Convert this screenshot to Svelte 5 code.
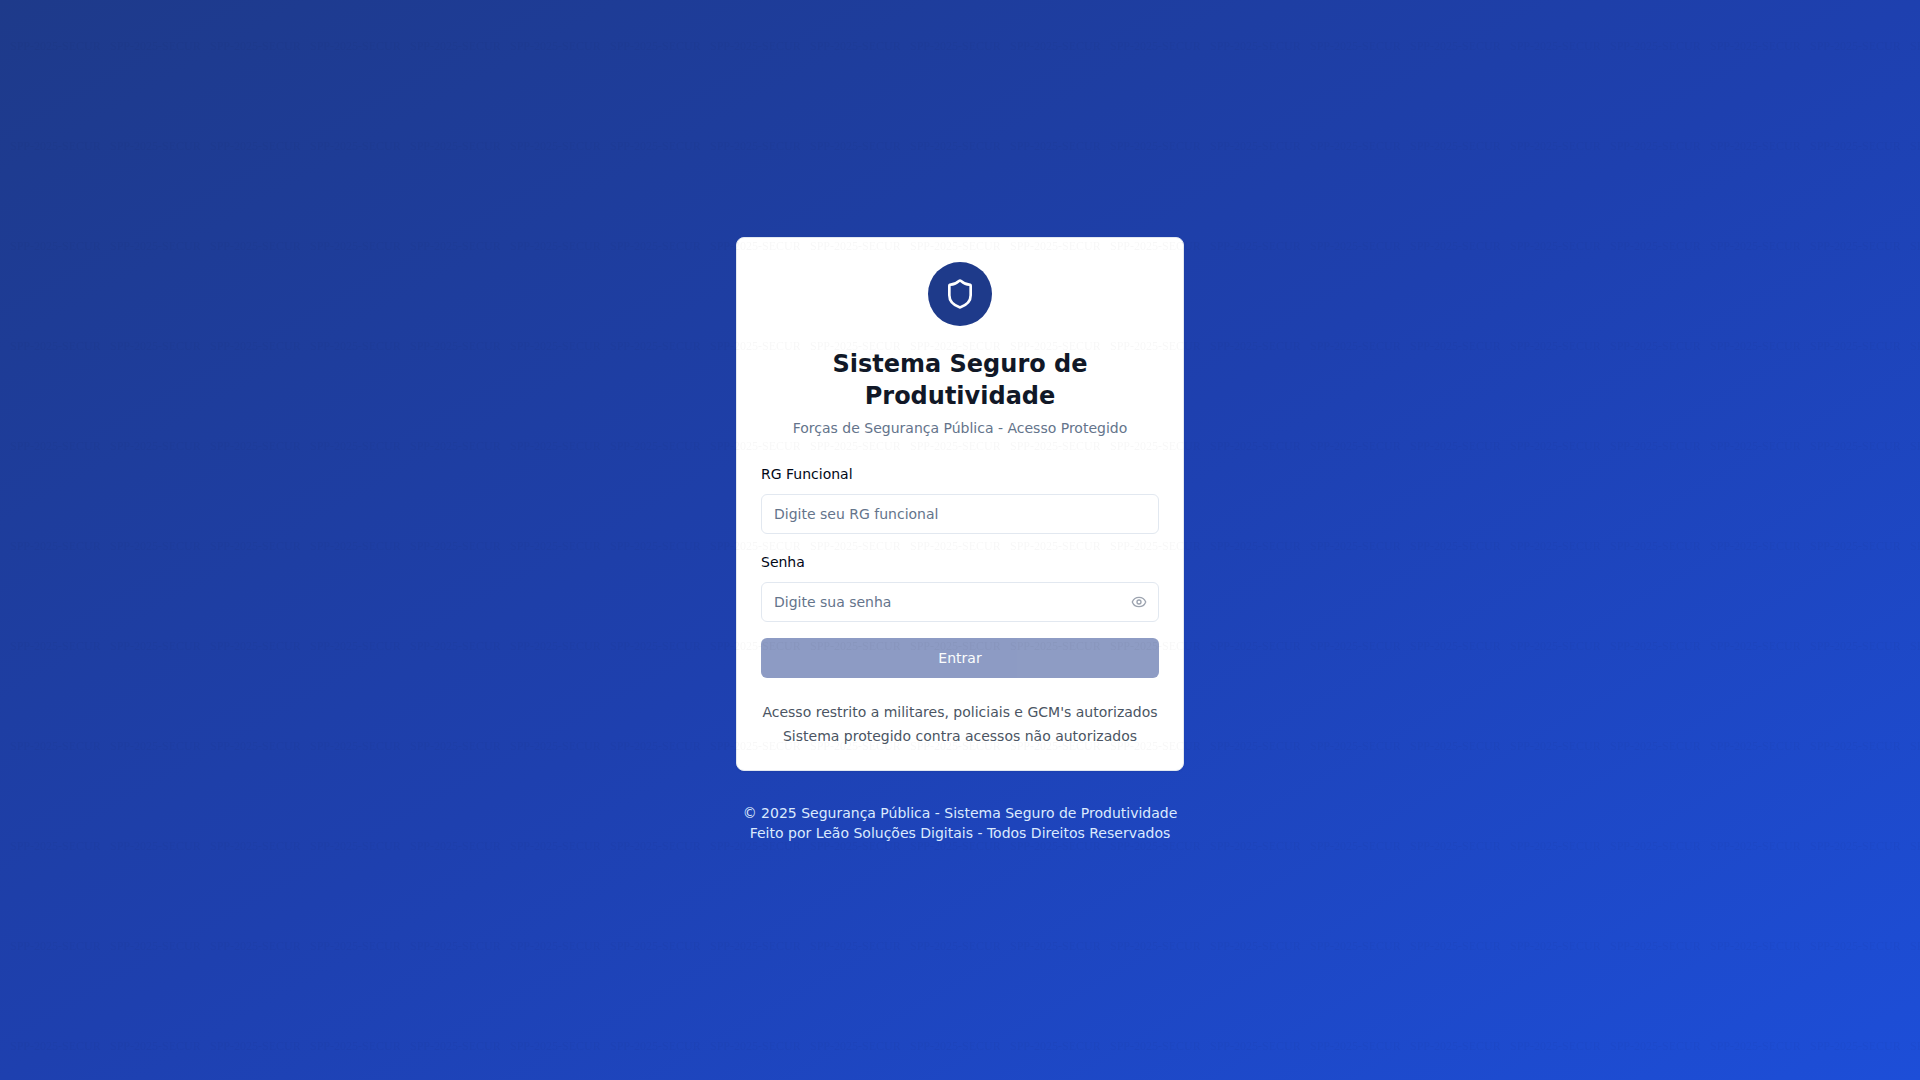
<script>
  let rg = $state('');
  let password = $state('');
  let visible = $state(false);
  const ready = $derived(rg.length > 0 && password.length > 0);
</script>

<main class="page">
  <div class="column">
    <section class="card">
      <header class="header">
        <div class="badge">
          <svg width="32" height="32" viewBox="0 0 24 24" aria-hidden="true">
            <path d="M20 13c0 5-3.5 7.5-7.66 8.95a1 1 0 0 1-.67-.01C7.5 20.5 4 18 4 13V6a1 1 0 0 1 1-1c2 0 4.5-1.2 6.24-2.72a1.17 1.17 0 0 1 1.52 0C14.51 3.81 17 5 19 5a1 1 0 0 1 1 1z" />
          </svg>
        </div>
        <h1>Sistema Seguro de Produtividade</h1>
        <p>Forças de Segurança Pública - Acesso Protegido</p>
      </header>

      <form onsubmit={(event) => event.preventDefault()}>
        <div class="field">
          <label for="rg">RG Funcional</label>
          <input id="rg" type="text" placeholder="Digite seu RG funcional" bind:value={rg} />
        </div>
        <div class="field">
          <label for="password">Senha</label>
          <div class="password">
            <input
              id="password"
              type={visible ? 'text' : 'password'}
              placeholder="Digite sua senha"
              bind:value={password}
            />
            <button class="reveal" type="button" aria-label="Mostrar senha" onclick={() => (visible = !visible)}>
              <svg width="16" height="16" viewBox="0 0 24 24" aria-hidden="true">
                <path d="M2.062 12.348a1 1 0 0 1 0-.696 10.75 10.75 0 0 1 19.876 0 1 1 0 0 1 0 .696 10.75 10.75 0 0 1-19.876 0" />
                <circle cx="12" cy="12" r="3" />
              </svg>
            </button>
          </div>
        </div>
        <button class="submit" type="submit" disabled={!ready}>Entrar</button>
      </form>

      <div class="notes">
        <p>Acesso restrito a militares, policiais e GCM's autorizados</p>
        <p>Sistema protegido contra acessos não autorizados</p>
      </div>
    </section>

    <footer>
      <p>© 2025 Segurança Pública - Sistema Seguro de Produtividade</p>
      <p>Feito por Leão Soluções Digitais - Todos Direitos Reservados</p>
    </footer>
  </div>
</main>

<svg class="watermark" aria-hidden="true">
  <defs>
    <pattern id="mark" width="100" height="100" patternUnits="userSpaceOnUse">
      <text x="10" y="50">SPP-2025-SECUR</text>
    </pattern>
  </defs>
  <rect width="100%" height="100%" fill="url(#mark)" />
</svg>

<style>
  :global(body) {
    margin: 0;
  }

  .page,
  .page * {
    box-sizing: border-box;
  }

  .page {
    min-height: 100vh;
    display: flex;
    align-items: center;
    justify-content: center;
    padding: 16px;
    background: linear-gradient(to bottom right, #1e3a8a, #1e40af, #1d4ed8);
    font-family: 'DejaVu Sans', sans-serif;
    font-size: 14px;
    line-height: 20px;
  }

  .column {
    width: 100%;
    max-width: 448px;
  }

  .card {
    padding: 24px;
    border: 1px solid #e2e8f0;
    border-radius: 8px;
    background: #fff;
    box-shadow: 0 1px 2px rgb(0 0 0 / 5%);
  }

  h1,
  p {
    margin: 0;
  }

  .header {
    display: flex;
    flex-direction: column;
    align-items: center;
    gap: 6px;
    padding-bottom: 24px;
    text-align: center;
    color: #64748b;
  }

  .badge {
    display: flex;
    align-items: center;
    justify-content: center;
    width: 64px;
    height: 64px;
    margin-bottom: 16px;
    border-radius: 50%;
    background: #1e3a8a;
    color: #fff;
  }

  .badge svg,
  .reveal svg {
    display: block;
    fill: none;
    stroke: currentColor;
    stroke-width: 2;
    stroke-linecap: round;
    stroke-linejoin: round;
  }

  h1 {
    color: #111827;
    font-size: 24px;
    line-height: 32px;
    font-weight: 700;
  }

  form {
    display: flex;
    flex-direction: column;
    gap: 16px;
  }

  .field {
    display: flex;
    flex-direction: column;
    gap: 8px;
  }

  label {
    color: #020817;
    line-height: 24px;
  }

  input {
    display: block;
    width: 100%;
    height: 40px;
    padding: 8px 12px;
    border: 1px solid #e2e8f0;
    border-radius: 6px;
    background: #fff;
    color: #020817;
    font: inherit;
  }

  input::placeholder {
    color: #64748b;
    opacity: 1;
  }

  .password {
    position: relative;
  }

  .password input {
    padding-right: 40px;
  }

  .reveal {
    position: absolute;
    top: 0;
    right: 0;
    height: 100%;
    padding: 0 12px;
    border: 0;
    background: none;
    color: #9ca3af;
    cursor: pointer;
  }

  .submit {
    height: 40px;
    padding: 8px 16px;
    border: 0;
    border-radius: 6px;
    background: #1e3a8a;
    color: #f8fafc;
    font: inherit;
    cursor: pointer;
  }

  .submit:disabled {
    opacity: 0.5;
    cursor: default;
  }

  .notes {
    display: flex;
    flex-direction: column;
    gap: 4px;
    margin-top: 24px;
    text-align: center;
    color: #4b5563;
  }

  footer {
    margin-top: 32px;
    text-align: center;
    color: #dbeafe;
  }

  .watermark {
    position: fixed;
    inset: 0;
    width: 100%;
    height: 100%;
    opacity: 0.03;
    pointer-events: none;
  }

  .watermark text {
    font-family: 'Liberation Serif', serif;
    font-size: 12px;
    fill: #000;
  }
</style>
